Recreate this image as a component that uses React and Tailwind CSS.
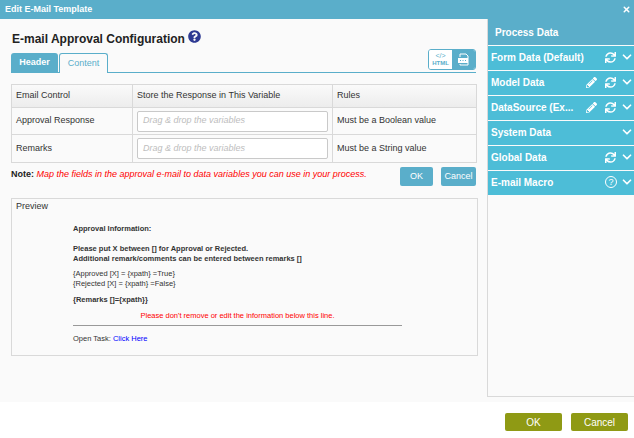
import React from "react";
import { FaPencilAlt, FaSync, FaQuestionCircle } from "react-icons/fa";
import { ChevronDown, X } from "lucide-react";

function PanelItem({ label, pencil, sync, help }) {
  return (
    <div className="mb-px flex h-[24px] items-center bg-[#4dbdd7] pb-[2px] pl-[3px] text-[10px] font-bold text-white">
      <span className="flex-1 truncate">{label}</span>
      {pencil && <FaPencilAlt className="mr-[8px] h-[11px] w-[11px]" />}
      {sync && <FaSync className="mr-[4px] h-[11px] w-[11px]" />}
      {help && (
        <span className="mr-[3px] flex h-[12px] w-[12px] items-center justify-center rounded-full border border-white text-[9px] font-normal leading-none">?</span>
      )}
      <ChevronDown className="h-[14px] w-[14px]" strokeWidth={3} />
    </div>
  );
}

function Row({ label, rule, h }) {
  return (
    <tr className={h}>
      <td className="border border-[#d9d9d9] pl-[4px] align-middle">{label}</td>
      <td className="border border-[#d9d9d9] px-[4px] align-middle">
        <div className="flex h-[21px] items-center rounded-[2px] border border-[#c9c9c9] bg-white pl-[5px] text-[9px] italic text-[#bdbdbd]">
          Drag &amp; drop the variables
        </div>
      </td>
      <td className="border border-[#d9d9d9] pl-[4px] align-middle">{rule}</td>
    </tr>
  );
}

export default function App() {
  return (
    <div className="flex h-[438px] w-[634px] flex-col overflow-hidden bg-[#fafafa] font-['Liberation_Sans',Arial,sans-serif] text-[#333]">
      <div className="flex h-[19px] shrink-0 items-center justify-between bg-[#5aaeca] pl-[5px] pr-[3px] text-[9px] font-bold text-white">
        <span>Edit E-Mail Template</span>
        <X className="h-[9px] w-[9px]" strokeWidth={4} />
      </div>

      <div className="flex h-[378px] shrink-0">
        <div className="w-[487px] shrink-0 pl-[11px] pr-[9px]">
          <div className="flex h-[34px] items-center pt-[5px] text-[12px] font-bold text-[#222]">
            <span className="pl-px">E-mail Approval Configuration</span>
            <FaQuestionCircle className="ml-[3px] h-[13px] w-[13px] -translate-y-[2px] text-[#2e3a92]" />
          </div>

          <div className="flex h-[20px] w-[465px] items-end border-b border-[#5aaeca]">
            <div className="flex h-[19px] w-[47px] items-center justify-center rounded-t-[3px] bg-[#5aaeca] text-[9px] font-bold text-white">Header</div>
            <div className="ml-[1px] flex h-[20px] w-[49px] translate-y-px items-center justify-center rounded-t-[3px] border border-b-0 border-[#5aaeca] bg-[#fafafa] text-[9px] text-[#5aaeca]">Content</div>
            <div className="mb-[2px] ml-auto flex h-[21px] w-[48px] overflow-hidden rounded-[3px] border border-[#5aaeca]">
              <div className="flex w-[23px] flex-col items-center justify-center bg-white text-[#5aaeca]">
                <span className="text-[7px] leading-[8px]">&lt;/&gt;</span>
                <span className="text-[6px] font-bold leading-[7px]">HTML</span>
              </div>
              <div className="flex flex-1 items-center justify-center bg-[#5aaeca]">
                <svg width="13" height="13" viewBox="0 0 13 13" fill="none" stroke="white" strokeWidth="1">
                  <path d="M3 4V1h6l2 2v9H3v-1" />
                  <rect x="1" y="5" width="10" height="5" fill="white" stroke="none" />
                  <path d="M3 7.500h1M5.500 7.500h1M8 7.500h1" stroke="#5aaeca" />
                </svg>
              </div>
            </div>
          </div>

          <table className="mt-[11px] w-[465px] table-fixed border-collapse text-[9px] text-[#333]">
            <colgroup>
              <col className="w-[121px]" />
              <col className="w-[200px]" />
              <col className="w-[144px]" />
            </colgroup>
            <tbody>
              <tr className="h-[23px] bg-gradient-to-b from-[#fafafa] to-[#ececec]">
                <td className="border border-[#d9d9d9] pl-[4px]">Email Control</td>
                <td className="border border-[#d9d9d9] pl-[4px]">Store the Response in This Variable</td>
                <td className="border border-[#d9d9d9] pl-[4px]">Rules</td>
              </tr>
              <Row label="Approval Response" rule="Must be a Boolean value" h="h-[27px]" />
              <Row label="Remarks" rule="Must be a String value" h="h-[28px]" />
            </tbody>
          </table>

          <div className="mt-[4px] flex w-[465px] items-start">
            <p className="flex-1 pt-[1px] text-[9px]">
              <b className="text-[#222]">Note:</b>{" "}
              <i className="text-[#f00]">Map the fields in the approval e-mail to data variables you can use in your process.</i>
            </p>
            <button className="h-[19px] w-[33px] rounded-[2px] bg-[#5aaeca] text-[9px] text-white">OK</button>
            <button className="ml-[8px] h-[19px] w-[35px] rounded-[2px] bg-[#5aaeca] text-[9px] text-white">Cancel</button>
          </div>

          <div className="mt-[12px] h-[158px] w-[467px] border border-[#d9d9d9] pl-[4px] text-[9px]">
            <div className="pt-[1px]">Preview</div>
            <div className="ml-[57px] mt-[10px] w-[329px] text-[7.500px] leading-[10px] text-[#333]">
              <p className="font-bold">Approval Information:</p>
              <p className="mt-[10px] font-bold">Please put X between [] for Approval or Rejected.</p>
              <p className="font-bold">Additional remark/comments can be entered between remarks []</p>
              <p className="mt-[5px]">{"{Approved [X] = {xpath} =True}"}</p>
              <p>{"{Rejected [X] = {xpath} =False}"}</p>
              <p className="mt-[6px] font-bold">{"{Remarks []={xpath}}"}</p>
              <p className="mt-[6px] text-center text-[#f00]">Please don't remove or edit the information below this line.</p>
              <div className="mt-[4px] border-t border-[#999]" />
              <p className="mt-[8px]">Open Task: <span className="text-[#00f]">Click Here</span></p>
            </div>
          </div>
        </div>

        <div className="w-[147px] shrink-0 border-b border-l border-[#d9d9d9] bg-[#fafafa]">
          <div className="mb-px flex h-[26px] items-center bg-[#5aaeca] pl-[7px] text-[10px] font-bold text-white">Process Data</div>
          <PanelItem label="Form Data (Default)" sync />
          <PanelItem label="Model Data" pencil sync />
          <PanelItem label="DataSource (Ex..." pencil sync />
          <PanelItem label="System Data" />
          <PanelItem label="Global Data" sync />
          <PanelItem label="E-mail Macro" help />
        </div>
      </div>

      <div className="mt-[5px] flex flex-1 items-start justify-end gap-[9px] bg-white pr-[6px] pt-[11px]">
        <button className="h-[18px] w-[57px] rounded-[2px] bg-[#8f9a14] text-[10px] text-white">OK</button>
        <button className="h-[18px] w-[57px] rounded-[2px] bg-[#8f9a14] text-[10px] text-white">Cancel</button>
      </div>
    </div>
  );
}
